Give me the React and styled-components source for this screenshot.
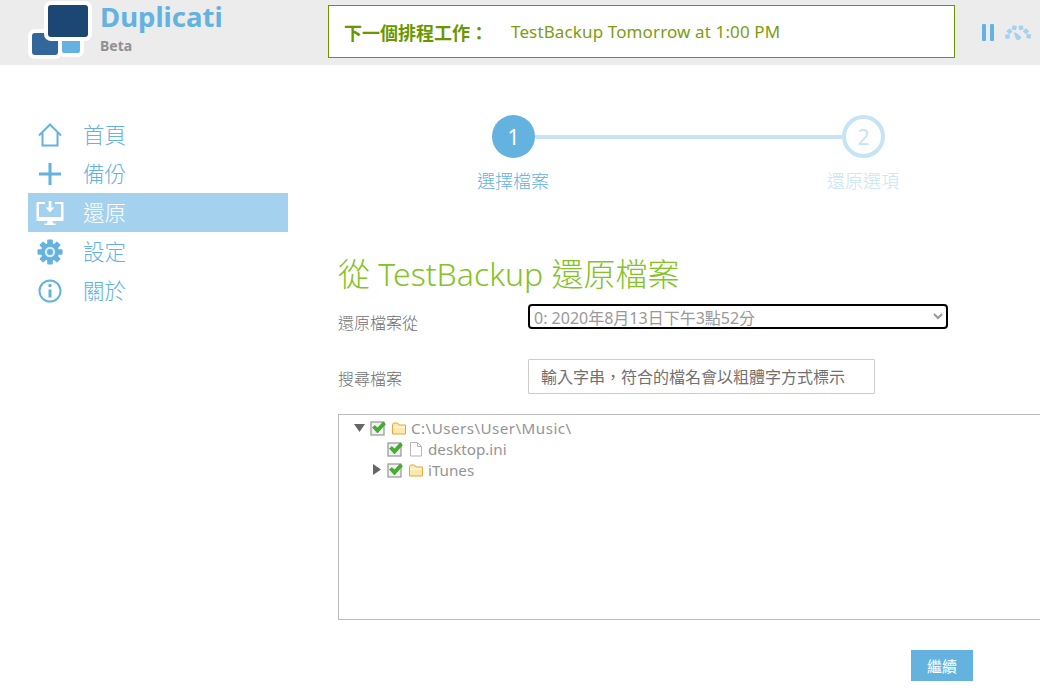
import React from "react";
import styled, { createGlobalStyle } from "styled-components";

const sans = `"Noto Sans", "Noto Sans CJK TC", sans-serif`;

const GlobalStyle = createGlobalStyle`
  html, body {
    margin: 0;
    padding: 0;
    background: #fff;
    overflow: hidden;
  }
  body {
    font-family: ${sans};
  }
  * {
    box-sizing: border-box;
  }
`;

const Page = styled.div`
  width: 1040px;
  height: 695px;
  overflow: hidden;
`;

const Header = styled.header`
  display: flex;
  align-items: flex-start;
  height: 65px;
  padding-left: 28px;
  background: #ececec;
`;

const Brand = styled.div`
  display: flex;
  width: 300px;
`;

const LogoSvg = styled.svg`
  display: block;
  width: 66px;
  height: 60px;
  flex: none;
`;

const BrandText = styled.div`
  display: flex;
  flex-direction: column;
  margin-left: 6px;
`;

const BrandName = styled.div`
  font-size: 27.5px;
  line-height: 34px;
  font-weight: 700;
  color: #64b2df;
`;

const BrandTag = styled.div`
  margin-top: 3px;
  font-size: 14px;
  line-height: 18px;
  font-weight: 700;
  color: #909090;
`;

const Notice = styled.div`
  display: flex;
  align-items: center;
  width: 627px;
  height: 53px;
  margin-top: 5px;
  padding-left: 15px;
  background: #fff;
  border: 1px solid #6a9600;
  color: #6a9600;
  font-size: 17px;
`;

const NoticeLabel = styled.strong`
  width: 167px;
  font-size: 18px;
  font-weight: 700;
`;

const NoticeText = styled.span`
  color: #7c9c10;
  letter-spacing: 0.13px;
`;

const Controls = styled.div`
  display: flex;
  align-items: center;
  height: 65px;
  margin-left: 27px;
  gap: 11px;
`;

const Body = styled.div`
  display: flex;
  padding: 50px 0 0 28px;
`;

const Nav = styled.nav`
  width: 260px;
  flex: none;
`;

const NavItem = styled.div`
  display: flex;
  align-items: center;
  height: 39px;
  padding-left: 8px;
  background: ${(p) => (p.$active ? "#a4d2ee" : "transparent")};
  color: ${(p) => (p.$active ? "#fff" : "#64b2df")};
  font-size: 21.5px;
`;

const NavIcon = styled.span`
  display: flex;
  align-items: center;
  justify-content: center;
  width: 28px;
  height: 28px;
  margin-right: 19px;
`;

const NavText = styled.span`
  margin-top: -2px;
  font-weight: 300;
`;

const Content = styled.main`
  width: 752px;
  margin-left: 50px;
  flex: none;
`;

const StepDots = styled.div`
  display: flex;
  align-items: center;
  width: 393px;
  margin-left: 154px;
`;

const StepDot = styled.div`
  display: flex;
  align-items: center;
  justify-content: center;
  width: 43px;
  height: 43px;
  border-radius: 50%;
  background: ${(p) => (p.$current ? "#64b2df" : "#fff")};
  border: ${(p) => (p.$current ? "none" : "4px solid #c7e4f5")};
  color: ${(p) => (p.$current ? "#fff" : "#c7e4f5")};
  font-size: 21px;
  flex: none;
`;

const StepLine = styled.div`
  flex: 1;
  height: 4px;
  background: #c7e4f5;
`;

const StepLabels = styled.div`
  display: flex;
  justify-content: space-between;
  width: 470px;
  margin: 11px 0 0 115px;
`;

const StepLabel = styled.div`
  width: 120px;
  text-align: center;
  font-size: 18px;
  line-height: 24px;
  font-weight: 300;
  color: ${(p) => (p.$current ? "#64b2df" : "#c7e4f5")};
`;

const Title = styled.h1`
  margin: 59px 0 0;
  font-size: 32px;
  line-height: 44px;
  font-weight: 300;
  color: #84c226;
`;

const FormRow = styled.div`
  display: flex;
  align-items: flex-start;
  margin-top: ${(p) => p.$top}px;
`;

const FieldLabel = styled.label`
  width: 190px;
  margin-top: ${(p) => p.$top}px;
  font-size: 16px;
  line-height: 22px;
  font-weight: 300;
  color: #707070;
  flex: none;
`;

const Select = styled.select`
  width: 420px;
  height: 25px;
  padding: 0;
  border: 2px solid #000;
  border-radius: 4px;
  outline: none;
  background: #fff;
  color: #999;
  font-family: ${sans};
  font-size: 16px;
`;

const SearchInput = styled.input`
  width: 347px;
  height: 35px;
  padding: 0 12px;
  border: 1px solid #ccc;
  border-radius: 1px;
  background: #fff;
  font-family: ${sans};
  font-size: 16px;
  &::placeholder {
    color: #707070;
    opacity: 1;
  }
`;

const TreeBox = styled.div`
  width: 760px;
  height: 206px;
  margin-top: 20px;
  padding-top: 2px;
  border: 1px solid #bbb;
`;

const TreeRow = styled.div`
  display: flex;
  align-items: center;
  height: 21px;
  padding-left: ${(p) => p.$indent}px;
  font-size: 15.2px;
  letter-spacing: ${(p) => (p.$path ? "0.45px" : "0")};
  color: #949494;
`;

const Arrow = styled.span`
  display: inline-flex;
  justify-content: center;
  width: 16px;
  margin-right: 3px;
  flex: none;
`;

const CheckSvg = styled.svg`
  display: block;
  width: 16px;
  height: 16px;
  margin: 0 5px 0 0;
  flex: none;
`;

const NodeSvg = styled.svg`
  display: block;
  width: 16px;
  height: 16px;
  margin-right: 4px;
  flex: none;
`;

const Actions = styled.div`
  display: flex;
  margin-top: 30px;
  padding-left: 573px;
`;

const Continue = styled.button`
  width: 62px;
  height: 31px;
  padding: 0;
  border: none;
  background: #64b2df;
  color: #fff;
  font-family: ${sans};
  font-size: 15px;
`;

const Logo = () => (
  <LogoSvg viewBox="0 0 66 60">
    <rect x="32" y="36" width="22" height="19" rx="4" fill="#64b2df" stroke="#fff" strokeWidth="4" />
    <rect x="2" y="31" width="30" height="26" rx="5" fill="#336699" stroke="#fff" strokeWidth="4" />
    <rect x="18" y="3" width="44" height="36" rx="5" fill="#1c4673" stroke="#fff" strokeWidth="4" />
  </LogoSvg>
);

const Pause = () => (
  <svg width="12" height="17" viewBox="0 0 12 17">
    <rect x="0" width="4" height="17" rx="1" fill="#64b2df" />
    <rect x="8" width="4" height="17" rx="1" fill="#64b2df" />
  </svg>
);

const dialBlocks = [
  [2.5, 11.5, -10],
  [4.5, 6.3, 45],
  [9.3, 2.8, 10],
  [16, 2.8, -10],
  [21, 6.3, 45],
  [23.7, 11.3, 10],
];

const Throttle = () => (
  <svg width="27" height="16" viewBox="0 0 27 16" fill="#a4d2ee">
    {dialBlocks.map(([x, y, r]) => (
      <rect key={x} x={x - 2.2} y={y - 2.2} width="4.4" height="4.4" transform={`rotate(${r} ${x} ${y})`} />
    ))}
    <path d="M8.500 7l4 1.800 3.500 3a3 3 0 0 1-5 2.500z" />
  </svg>
);

const HomeIcon = () => (
  <svg width="24" height="24" viewBox="0 0 24 24" fill="none" stroke="#64b2df" strokeWidth="2">
    <path d="M1 12.500L12 1.500l11 11M4.500 10v12.500h15V10" />
  </svg>
);

const PlusIcon = () => (
  <svg width="22" height="22" viewBox="0 0 22 22" fill="none" stroke="#64b2df" strokeWidth="3">
    <path d="M0 11h22M11 0v22" />
  </svg>
);

const RestoreIcon = () => (
  <svg width="28" height="26" viewBox="0 0 28 26" fill="#fff">
    <path d="M1.500 2H9v2H3v13h22V4h-6V2h7.500A1 1 0 0 1 27.500 3v17a1 1 0 0 1-1 1h-25a1 1 0 0 1-1-1V3a1 1 0 0 1 1-1z" />
    <path d="M12.700 1h2.600v6.500h3L14 12.500l-4.300-5h3z" />
    <path d="M11.500 21h5l.5 2.500h2.500V25h-11v-1.500H11z" />
  </svg>
);

const gearTeeth = [0, 45, 90, 135, 180, 225, 270, 315];

const GearIcon = () => (
  <svg width="26" height="26" viewBox="0 0 26 26">
    {gearTeeth.map((deg) => (
      <rect key={deg} x="10.200" y="0.500" width="5.600" height="6" rx="1" fill="#64b2df" transform={`rotate(${deg} 13 13)`} />
    ))}
    <circle cx="13" cy="13" r="9" fill="#64b2df" />
    <circle cx="13" cy="13" r="5.200" fill="#d8edf8" />
    <circle cx="13" cy="13" r="3" fill="#64b2df" />
  </svg>
);

const InfoIcon = () => (
  <svg width="24" height="24" viewBox="0 0 24 24" fill="none" stroke="#64b2df" strokeWidth="2">
    <circle cx="12" cy="12" r="10.500" />
    <path d="M12 10.500v8" strokeWidth="3" />
    <circle cx="12" cy="6.500" r="1.700" fill="#64b2df" stroke="none" />
  </svg>
);

const Check = () => (
  <CheckSvg viewBox="0 0 16 16">
    <rect x="1" y="2" width="13" height="13" fill="#f1f1f1" stroke="#969696" strokeWidth="1.200" />
    <path d="M2.500 7.500l2.500-2 2.500 2.500L13 2l2.500 2-8 9z" fill="#3fb02a" stroke="#2f8a1c" strokeWidth="0.500" />
  </CheckSvg>
);

const Folder = () => (
  <NodeSvg viewBox="0 0 16 16">
    <path d="M1.500 4.500V14h13V5H8L6.500 3h-4z" fill="#fde9ab" stroke="#e5a83c" />
    <path d="M2 7h12" stroke="#fff" />
  </NodeSvg>
);

const FileNode = () => (
  <NodeSvg viewBox="0 0 16 16">
    <path d="M2.500 1.500h7l4 4v9.500h-11zM9.500 1.500v4h4" fill="#fff" stroke="#b5b5b5" />
  </NodeSvg>
);

const Triangle = ({ open }) => (
  <Arrow>
    <svg width="11" height="11" viewBox="0 0 11 11" fill="#666">
      {open ? <path d="M0 2h11L5.500 10z" /> : <path d="M2 0l8 5.500-8 5.500z" />}
    </svg>
  </Arrow>
);

const navItems = [
  { label: "首頁", icon: <HomeIcon /> },
  { label: "備份", icon: <PlusIcon /> },
  { label: "還原", icon: <RestoreIcon />, active: true },
  { label: "設定", icon: <GearIcon /> },
  { label: "關於", icon: <InfoIcon /> },
];

const App = () => {
  return (
    <Page>
      <GlobalStyle />
      <Header>
        <Brand>
          <Logo />
          <BrandText>
            <BrandName>Duplicati</BrandName>
            <BrandTag>Beta</BrandTag>
          </BrandText>
        </Brand>
        <Notice>
          <NoticeLabel>下一個排程工作：</NoticeLabel>
          <NoticeText>TestBackup Tomorrow at 1:00 PM</NoticeText>
        </Notice>
        <Controls>
          <Pause />
          <Throttle />
        </Controls>
      </Header>
      <Body>
        <Nav>
          {navItems.map((item) => (
            <NavItem key={item.label} $active={item.active}>
              <NavIcon>{item.icon}</NavIcon>
              <NavText>{item.label}</NavText>
            </NavItem>
          ))}
        </Nav>
        <Content>
          <StepDots>
            <StepDot $current>1</StepDot>
            <StepLine />
            <StepDot>2</StepDot>
          </StepDots>
          <StepLabels>
            <StepLabel $current>選擇檔案</StepLabel>
            <StepLabel>還原選項</StepLabel>
          </StepLabels>
          <Title>從 TestBackup 還原檔案</Title>
          <FormRow $top={8}>
            <FieldLabel $top={8}>還原檔案從</FieldLabel>
            <Select defaultValue="0">
              <option value="0">0: 2020年8月13日下午3點52分</option>
            </Select>
          </FormRow>
          <FormRow $top={25}>
            <FieldLabel $top={9}>搜尋檔案</FieldLabel>
            <SearchInput placeholder="輸入字串，符合的檔名會以粗體字方式標示" />
          </FormRow>
          <TreeBox>
            <TreeRow $indent={12} $path>
              <Triangle open />
              <Check />
              <Folder />
              C:\Users\User\Music\
            </TreeRow>
            <TreeRow $indent={48}>
              <Check />
              <FileNode />
              desktop.ini
            </TreeRow>
            <TreeRow $indent={29}>
              <Triangle />
              <Check />
              <Folder />
              iTunes
            </TreeRow>
          </TreeBox>
          <Actions>
            <Continue>繼續</Continue>
          </Actions>
        </Content>
      </Body>
    </Page>
  );
};

export default App;
